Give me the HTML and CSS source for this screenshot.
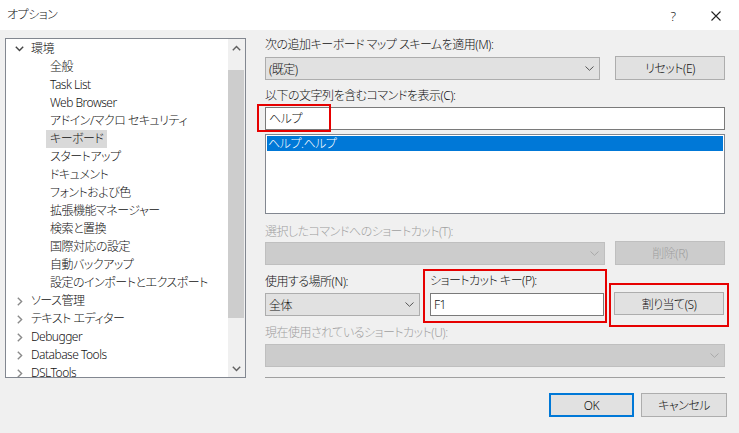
FILE: index.html
```html
<!DOCTYPE html>
<html lang="ja">
<head>
  <meta charset="UTF-8">
  <title>オプション</title>
  <link rel="stylesheet" href="styles.css">
</head>
<body>
  <div class="dialog">
    <div class="titlebar">
      <span class="title">オプション</span>
      <span class="help">?</span>
      <span class="close">
        <svg width="10" height="10" viewBox="0 0 10 10"><path d="M0.5 0.5L9.5 9.5M9.5 0.5L0.5 9.5" stroke="#222" stroke-width="1.1" fill="none"/></svg>
      </span>
    </div>

    <div class="main">
      <!-- 左：ツリー -->
      <div class="tree">
        <ul class="tree-list">
          <li class="node"><span class="twisty"><svg width="9" height="6" viewBox="0 0 9 6"><path d="M0.8 0.8L4.5 4.6L8.2 0.8" stroke="#444" stroke-width="1.4" fill="none"/></svg></span>環境</li>
          <li class="leaf">全般</li>
          <li class="leaf">Task List</li>
          <li class="leaf">Web Browser</li>
          <li class="leaf">アドイン/マクロ セキュリティ</li>
          <li class="leaf"><span class="sel">キーボード</span></li>
          <li class="leaf">スタートアップ</li>
          <li class="leaf">ドキュメント</li>
          <li class="leaf">フォントおよび色</li>
          <li class="leaf">拡張機能マネージャー</li>
          <li class="leaf">検索と置換</li>
          <li class="leaf">国際対応の設定</li>
          <li class="leaf">自動バックアップ</li>
          <li class="leaf">設定のインポートとエクスポート</li>
          <li class="node"><span class="twisty closed"><svg width="6" height="9" viewBox="0 0 6 9"><path d="M0.8 0.8L4.6 4.5L0.8 8.2" stroke="#8a8a8a" stroke-width="1.4" fill="none"/></svg></span>ソース管理</li>
          <li class="node"><span class="twisty closed"><svg width="6" height="9" viewBox="0 0 6 9"><path d="M0.8 0.8L4.6 4.5L0.8 8.2" stroke="#8a8a8a" stroke-width="1.4" fill="none"/></svg></span>テキスト エディター</li>
          <li class="node"><span class="twisty closed"><svg width="6" height="9" viewBox="0 0 6 9"><path d="M0.8 0.8L4.6 4.5L0.8 8.2" stroke="#8a8a8a" stroke-width="1.4" fill="none"/></svg></span>Debugger</li>
          <li class="node"><span class="twisty closed"><svg width="6" height="9" viewBox="0 0 6 9"><path d="M0.8 0.8L4.6 4.5L0.8 8.2" stroke="#8a8a8a" stroke-width="1.4" fill="none"/></svg></span>Database Tools</li>
          <li class="node"><span class="twisty closed"><svg width="6" height="9" viewBox="0 0 6 9"><path d="M0.8 0.8L4.6 4.5L0.8 8.2" stroke="#8a8a8a" stroke-width="1.4" fill="none"/></svg></span>DSLTools</li>
        </ul>
        <div class="vscroll">
          <div class="sb-arrow"><svg width="9" height="6" viewBox="0 0 9 6"><path d="M0.8 5.2L4.5 1.4L8.2 5.2" stroke="#606060" stroke-width="1.4" fill="none"/></svg></div>
          <div class="sb-track"><div class="sb-thumb"></div></div>
          <div class="sb-arrow"><svg width="9" height="6" viewBox="0 0 9 6"><path d="M0.8 0.8L4.5 4.6L8.2 0.8" stroke="#606060" stroke-width="1.4" fill="none"/></svg></div>
        </div>
      </div>

      <!-- 右：設定 -->
      <div class="pane">
        <div class="label l-first">次の追加キーボード マップ スキームを適用(M):</div>
        <div class="row r-scheme">
          <div class="combo c-scheme"><span>(既定)</span>
            <svg class="drop" width="9" height="5" viewBox="0 0 9 5"><path d="M0.5 0.5L4.5 4.3L8.5 0.5" stroke="#555" stroke-width="1" fill="none"/></svg>
          </div>
          <div class="btn">リセット(E)</div>
        </div>

        <div class="label l-filter">以下の文字列を含むコマンドを表示(C):</div>
        <div class="textbox">ヘルプ</div>
        <div class="listbox">
          <div class="item selected">ヘルプ.ヘルプ</div>
        </div>

        <div class="label disabled l-sel">選択したコマンドへのショートカット(T):</div>
        <div class="row r-sel">
          <div class="combo off c-sel">
            <svg class="drop" width="9" height="5" viewBox="0 0 9 5"><path d="M0.5 0.5L4.5 4.3L8.5 0.5" stroke="#a8a8a8" stroke-width="1" fill="none"/></svg>
          </div>
          <div class="btn off">削除(R)</div>
        </div>

        <div class="row r-assign">
          <div class="col col-scope">
            <div class="label">使用する場所(N):</div>
            <div class="combo c-scope"><span>全体</span>
              <svg class="drop" width="9" height="5" viewBox="0 0 9 5"><path d="M0.5 0.5L4.5 4.3L8.5 0.5" stroke="#555" stroke-width="1" fill="none"/></svg>
            </div>
          </div>
          <div class="col col-key">
            <div class="label">ショートカット キー(P):</div>
            <div class="textbox">F1</div>
          </div>
          <div class="btn b-assign">割り当て(S)</div>
        </div>

        <div class="label disabled l-used">現在使用されているショートカット(U):</div>
        <div class="combo off c-used">
          <svg class="drop" width="9" height="5" viewBox="0 0 9 5"><path d="M0.5 0.5L4.5 4.3L8.5 0.5" stroke="#a8a8a8" stroke-width="1" fill="none"/></svg>
        </div>
        <div class="separator"></div>
      </div>
    </div>

    <div class="footer">
      <div class="btn b-ok">OK</div>
      <div class="btn b-cancel">キャンセル</div>
    </div>

    <!-- 赤枠の注釈 -->
    <div class="mark mark-filter"></div>
    <div class="mark mark-key"></div>
    <div class="mark mark-assign"></div>
  </div>
</body>
</html>
```

FILE: styles.css
```css
*{ box-sizing: border-box; margin: 0; padding: 0;}
body{ width: 739px; height: 433px; overflow: hidden; background: #f0f0f0;
  font-family: "Noto Sans", "Noto Sans CJK JP", sans-serif; font-size: 12px; color: #111;
  font-weight: 300; letter-spacing: -0.5px; font-feature-settings: "palt";}
.dialog{ position: relative; width: 739px; height: 433px;}

/* title bar */
.titlebar{ height: 30px; background: #fff; display: flex; align-items: center; padding-left: 7px;}
.title{ line-height: 16px;}
.help{ margin-left: auto; font-size: 13px; margin-right: 35px; margin-top: 1px; letter-spacing: 0;}
.close{ width: 10px; height: 10px; margin-right: 18px; margin-top: 2px; display: flex;}

.main{ display: flex; padding-left: 5px; height: 348px;}

/* tree */
.tree{ width: 241px; height: 340px; margin-top: 8px; border: 1px solid #828790; background: #fff; display: flex;}
.tree-list{ flex: 1; list-style: none; overflow: hidden; padding-top: 1px;}
.tree-list li{ height: 18px; line-height: 18px; white-space: nowrap; display: flex; align-items: center;}
.twisty{ width: 25px; display: flex; align-items: center; padding-left: 9px;}
.twisty.closed{ padding-left: 11px;}
.leaf{ padding-left: 44px;}
.sel{ background: #d9d9d9; padding: 0 4px; margin-left: -4px; line-height: 18px;}

.vscroll{ width: 17px; background: #f0f0f0; display: flex; flex-direction: column;}
.sb-arrow{ height: 17px; display: flex; align-items: center; justify-content: center;}
.sb-track{ flex: 1;}
.sb-thumb{ margin: 14px 1px 0 0; height: 248px; background: #cdcdcd;}

/* right pane */
.pane{ width: 460px; margin-left: 19px; display: flex; flex-direction: column;}
.label{ height: 16px; line-height: 16px; white-space: nowrap;}
.label.disabled{ color: #a0a0a0;}
.l-first{ margin-top: 7px;}
.l-filter{ margin-top: 8px;}
.l-sel{ margin-top: 10px;}
.l-used{ margin-top: 9px;}

.row{ display: flex;}
.r-scheme{ margin-top: 4px;}
.r-sel{ margin-top: 2px;}
.r-assign{ margin-top: 8px; align-items: flex-end;}

.combo{ height: 23px; border: 1px solid #adadad; background: #e1e1e1; display: flex; align-items: center; padding: 0 5px 0 3px;}
.combo .drop{ margin-left: auto;}
.combo.off{ background: #cccccc; border-color: #bfbfbf;}
.c-scheme{ width: 335px;}
.c-sel{ width: 340px;}
.c-scope{ width: 155px; margin-top: 3px;}
.c-used{ width: 460px; margin-top: 3px;}

.btn{ height: 24px; border: 1px solid #adadad; background: #e1e1e1; display: flex; align-items: center; justify-content: center; white-space: nowrap;}
.r-scheme .btn, .r-sel .btn{ width: 110px; margin-left: auto; margin-top: -1px;}
.btn.off{ background: #cccccc; border-color: #bfbfbf; color: #a0a0a0;}

.textbox{ height: 23px; margin-top: 3px; border: 1px solid #7a7a7a; background: #fff; padding-left: 3px; line-height: 21px;}
.listbox{ height: 80px; margin-top: 4px; border: 1px solid #828790; background: #fff; padding: 1px;}
.item{ height: 15px; line-height: 15px; padding-left: 1px;}
.item.selected{ background: #0078d7; color: #fff;}

.col-scope{ width: 155px;}
.col-key{ width: 174px; margin-left: 10px;}
.col-key .textbox{ margin-top: 4px;}
.b-assign{ width: 110px; margin-left: 10px; margin-bottom: 1px; height: 23px;}

.separator{ height: 1px; background: #a0a0a0; margin-top: 10px;}

/* footer */
.footer{ display: flex; justify-content: flex-end; padding-right: 12px; margin-top: 15px;}
.b-ok{ width: 85px; border: 2px solid #0078d7;}
.b-cancel{ width: 86px; margin-left: 7px;}

/* red annotation boxes */
.mark{ position: absolute; border: 2px solid #e60000;}
.mark-filter{ left: 257px; top: 104px; width: 74px; height: 28px;}
.mark-key{ left: 423px; top: 269px; width: 184px; height: 54px;}
.mark-assign{ left: 609px; top: 283px; width: 120px; height: 44px;}
```
